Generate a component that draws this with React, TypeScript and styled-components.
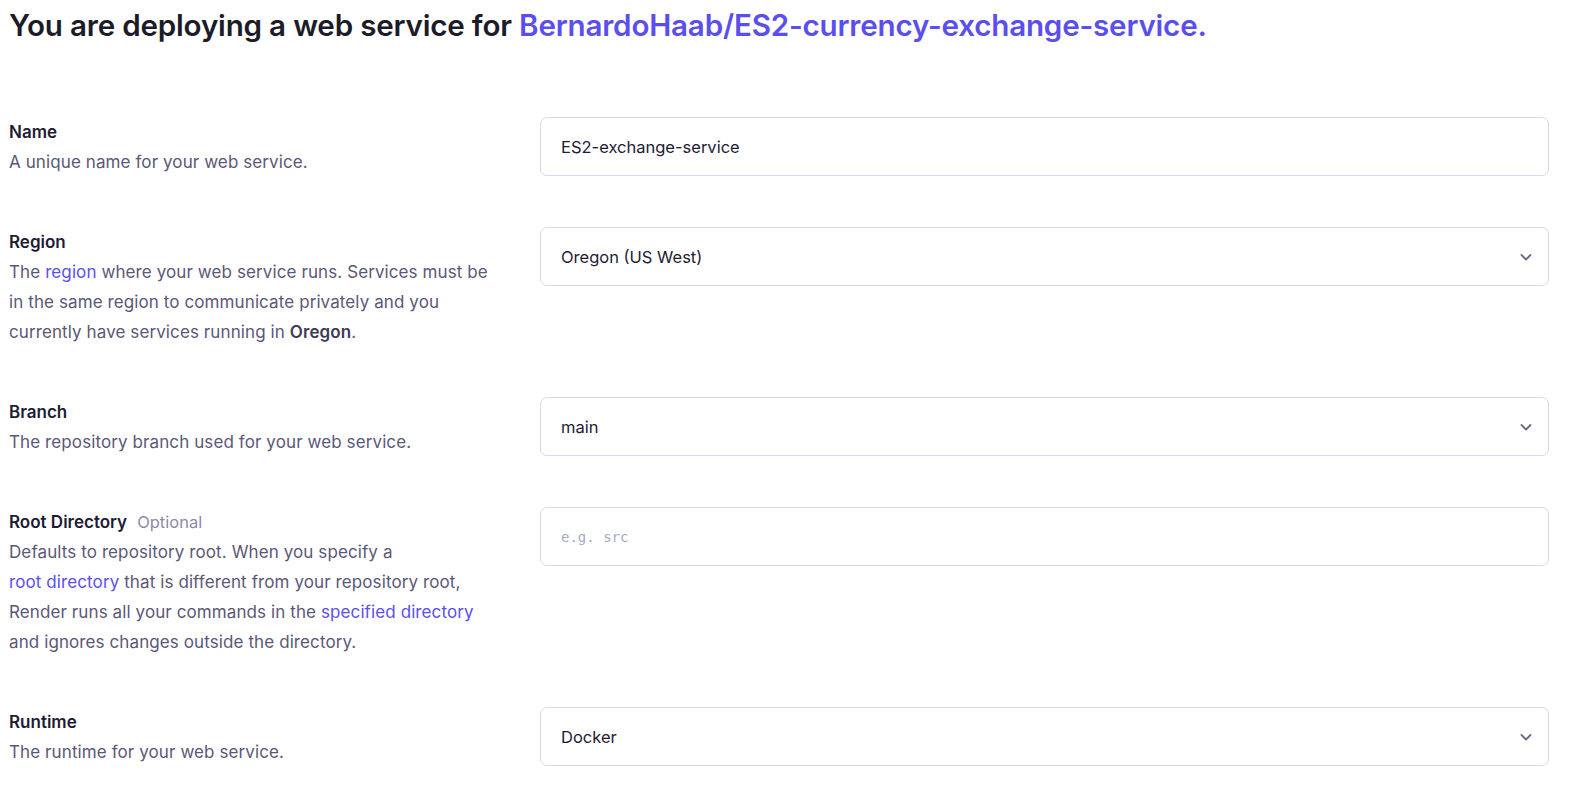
import React from 'react';
import styled, { createGlobalStyle } from 'styled-components';

const GlobalStyle = createGlobalStyle`
  body {
    margin: 0;
    background: #ffffff;
    font-family: Inter, "Noto Sans", sans-serif;
    color: #1e1b33;
  }
`;

const Page = styled.main`
  padding: 8px 24px 0 9px;
`;

const Title = styled.h1`
  margin: 0;
  font-size: 29.6px;
  line-height: 34px;
  font-weight: 600;
  letter-spacing: -0.2px;
  color: #1c1c28;
`;

const Repo = styled.span`
  color: #5a4fee;
`;

const Form = styled.div`
  display: flex;
  flex-direction: column;
  gap: 50px;
  margin-top: 75px;
`;

const Row = styled.section`
  display: grid;
  grid-template-columns: 531px 1fr;
  align-items: start;
`;

const Info = styled.div`
  display: flex;
  flex-direction: column;
`;

const Label = styled.div`
  font-size: 17px;
  line-height: 30px;
  font-weight: 600;
  color: #1e1b33;
`;

const Optional = styled.span`
  margin-left: 10px;
  font-size: 16.5px;
  font-weight: 400;
  color: #8e8aa6;
`;

const Desc = styled.p`
  margin: 0;
  font-size: 17px;
  line-height: 30px;
  letter-spacing: 0.1px;
  color: #5b5777;
`;

const Link = styled.a`
  color: #5a4fee;
  text-decoration: none;
`;

const Strong = styled.strong`
  font-weight: 600;
  color: #3f3b57;
`;

const Field = styled.div`
  position: relative;
  box-sizing: border-box;
  height: 59px;
  display: flex;
  align-items: center;
  padding: 0 20px;
  border: 1px solid #d1dbef;
  border-radius: 7px;
  background: #fff;
  font-size: 16.5px;
  color: #1e1b33;
`;

const Placeholder = styled.span`
  font-family: "DejaVu Sans Mono", "Liberation Mono", monospace;
  font-size: 14px;
  color: #a3aacb;
`;

const Chevron = styled.svg`
  position: absolute;
  right: 14px;
  top: 50%;
  transform: translateY(-50%);
`;

function Select({ value }: { value: string }) {
  return (
    <Field>
      {value}
      <Chevron width="16" height="16" viewBox="0 0 16 16" fill="none">
        <path d="M3.5 6l4.5 4.5L12.5 6" stroke="#6b6880" strokeWidth="1.8" strokeLinecap="round" strokeLinejoin="round" />
      </Chevron>
    </Field>
  );
}

export default function App() {
  return (
    <>
      <GlobalStyle />
      <Page>
        <Title>
          You are deploying a web service for <Repo>BernardoHaab/ES2-currency-exchange-service.</Repo>
        </Title>
        <Form>
          <Row>
            <Info>
              <Label>Name</Label>
              <Desc>A unique name for your web service.</Desc>
            </Info>
            <Field>ES2-exchange-service</Field>
          </Row>
          <Row>
            <Info>
              <Label>Region</Label>
              <Desc>
                The <Link>region</Link> where your web service runs. Services must be
                <br />
                in the same region to communicate privately and you
                <br />
                currently have services running in <Strong>Oregon</Strong>.
              </Desc>
            </Info>
            <Select value="Oregon (US West)" />
          </Row>
          <Row>
            <Info>
              <Label>Branch</Label>
              <Desc>The repository branch used for your web service.</Desc>
            </Info>
            <Select value="main" />
          </Row>
          <Row>
            <Info>
              <Label>
                Root Directory<Optional>Optional</Optional>
              </Label>
              <Desc>
                Defaults to repository root. When you specify a
                <br />
                <Link>root directory</Link> that is different from your repository root,
                <br />
                Render runs all your commands in the <Link>specified directory</Link>
                <br />
                and ignores changes outside the directory.
              </Desc>
            </Info>
            <Field>
              <Placeholder>e.g. src</Placeholder>
            </Field>
          </Row>
          <Row>
            <Info>
              <Label>Runtime</Label>
              <Desc>The runtime for your web service.</Desc>
            </Info>
            <Select value="Docker" />
          </Row>
        </Form>
      </Page>
    </>
  );
}
